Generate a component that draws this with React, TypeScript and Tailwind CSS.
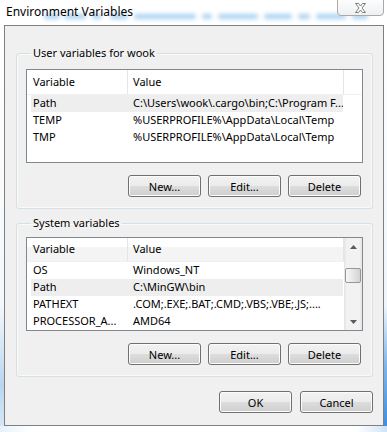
import React from "react";

const F = "font-['Segoe_UI','Noto_Sans',sans-serif]";

function Btn({ label }: { label: string }) {
  return (
    <div className="w-[73px] h-[22px] rounded-[3px] border border-[#707070] bg-[linear-gradient(to_bottom,#f2f2f2_0%,#ebebeb_50%,#dddddd_50%,#cfcfcf_100%)] shadow-[inset_0_0_0_1px_#fcfcfc] flex items-center justify-center text-[11px] leading-none text-black">
      {label}
    </div>
  );
}

type Row = { k: string; v: string; hl?: boolean };

function Rows({ rows }: { rows: Row[] }) {
  return (
    <div className="flex flex-col">
      {rows.map((r, i) => (
        <div
          key={i}
          className={`ml-[4px] w-[312px] h-[17px] flex items-center text-[11px] text-black ${r.hl ? "bg-[#eeeeee]" : ""}`}
        >
          <div className="w-[97px] pl-[2px] whitespace-nowrap overflow-hidden">{r.k}</div>
          <div className="flex-1 pl-[5px] whitespace-nowrap overflow-hidden">{r.v}</div>
        </div>
      ))}
    </div>
  );
}

function Header({ alt }: { alt?: boolean }) {
  return (
    <div
      className={`h-[25px] flex text-[11px] text-black border-b border-[#f0f0f0] ${alt ? "bg-[linear-gradient(to_bottom,#ffffff_0%,#ffffff_40%,#f4f4f4_40%,#f4f4f4_100%)]" : "bg-white"}`}
    >
      <div className="w-[101px] border-r border-[#e5e5e5] pl-[6px] flex items-center">Variable</div>
      <div className="w-[216px] border-r border-[#e5e5e5] pl-[5px] flex items-center">Value</div>
      <div className="flex-1" />
    </div>
  );
}

function Tri({ up }: { up?: boolean }) {
  return (
    <svg width="7" height="4" viewBox="0 0 7 4">
      {up ? <polygon points="0,4 7,4 3.5,0" fill="#5a5a5a" /> : <polygon points="0,0 7,0 3.5,4" fill="#5a5a5a" />}
    </svg>
  );
}

const blurSegs = [
  [44, 16], [64, 22], [92, 10], [110, 18], [134, 62], [202, 10], [218, 40], [264, 28], [298, 12], [316, 30], [352, 16],
];

export default function App() {
  return (
    <div className={`w-[387px] h-[432px] bg-white overflow-hidden flex flex-col ${F}`}>
      {/* title bar */}
      <div className="relative h-[25px] flex items-start shrink-0">
        {blurSegs.map(([x, w], i) => (
          <div
            key={i}
            className="absolute top-[14px] h-[5px] rounded-full bg-[#a9d2f3] blur-[2px]"
            style={{ left: x, width: w }}
          />
        ))}
        <div className="relative pl-[6px] pt-[4px] text-[12px] leading-[16px] text-black">Environment Variables</div>
        <div className="relative ml-auto mr-[3px] mt-[-1px] w-[47px] h-[17px] rounded-b-[4px] border border-[#a9a9a9] bg-[linear-gradient(to_bottom,#fdfdfd,#eef0f2)] flex items-center justify-center">
          <svg width="11" height="10" viewBox="-0.5 -0.5 11 10">
            <polygon
              points="0,0 3,0 5,2.5 7,0 10,0 6.5,4.5 10,9 7,9 5,6.5 3,9 0,9 3.5,4.5"
              fill="#ffffff"
              stroke="#7c7c7c"
              strokeWidth="1"
              strokeLinejoin="round"
            />
          </svg>
        </div>
      </div>

      {/* body row */}
      <div className="flex h-[401px] shrink-0">
        <div className="w-[4px] bg-[linear-gradient(to_bottom,#ffffff_0%,#f4f8fb_70%,#b9d6f0_90%,#d6e7f6_100%)]" />
        <div className="w-[380px] border border-[#7f7f7f] bg-[#f0f0f0] flex flex-col pl-[11px] pr-[10px]">
          {/* user variables */}
          <fieldset className="mt-[19px] border border-[#d5dfe5] rounded-[3px] shadow-[inset_0_0_0_1px_#fafafa] px-[9px] pt-[8px] pb-[11px]">
            <legend className="ml-[5px] px-[2px] text-[11px] leading-[16px] text-black">User variables for wook</legend>
            <div className="h-[94px] border border-[#828790] bg-white flex flex-col overflow-hidden">
              <Header />
              <Rows
                rows={[
                  { k: "Path", v: "C:\\Users\\wook\\.cargo\\bin;C:\\Program F...", hl: true },
                  { k: "TEMP", v: "%USERPROFILE%\\AppData\\Local\\Temp" },
                  { k: "TMP", v: "%USERPROFILE%\\AppData\\Local\\Temp" },
                ]}
              />
            </div>
            <div className="mt-[12px] pr-[2px] flex justify-end gap-[7px]">
              <Btn label="New..." />
              <Btn label="Edit..." />
              <Btn label="Delete" />
            </div>
          </fieldset>

          {/* system variables */}
          <fieldset className="mt-[6px] border border-[#d5dfe5] rounded-[3px] shadow-[inset_0_0_0_1px_#fafafa] px-[9px] pt-[6px] pb-[11px]">
            <legend className="ml-[5px] px-[2px] text-[11px] leading-[16px] text-black">System variables</legend>
            <div className="h-[94px] border border-[#828790] bg-white flex overflow-hidden">
              <div className="w-[317px] flex flex-col">
                <Header alt />
                <Rows
                  rows={[
                    { k: "OS", v: "Windows_NT" },
                    { k: "Path", v: "C:\\MinGW\\bin", hl: true },
                    { k: "PATHEXT", v: ".COM;.EXE;.BAT;.CMD;.VBS;.VBE;.JS;...." },
                    { k: "PROCESSOR_A...", v: "AMD64" },
                  ]}
                />
              </div>
              <div className="flex-1 flex flex-col bg-[linear-gradient(to_right,#e3e3e3_0%,#f2f2f2_15%,#f2f2f2_85%,#e3e3e3_100%)]">
                <div className="h-[17px] flex items-center justify-center">
                  <Tri up />
                </div>
                <div className="h-[13px]" />
                <div className="mx-[1px] h-[15px] rounded-[2px] border border-[#979797] bg-[linear-gradient(to_right,#f7f7f7,#e6e6e6_50%,#d2d2d2)]" />
                <div className="flex-1" />
                <div className="h-[17px] flex items-center justify-center">
                  <Tri />
                </div>
              </div>
            </div>
            <div className="mt-[12px] pr-[2px] flex justify-end gap-[7px]">
              <Btn label="New..." />
              <Btn label="Edit..." />
              <Btn label="Delete" />
            </div>
          </fieldset>

          <div className="mt-[14px] flex justify-end gap-[8px]">
            <Btn label="OK" />
            <Btn label="Cancel" />
          </div>
        </div>
        <div className="w-[3px] bg-[linear-gradient(to_bottom,#ffffff_0%,#eef5fb_70%,#7fb6ea_85%,#3e8fe0_100%)]" />
      </div>
      <div className="flex-1 bg-[linear-gradient(to_right,#e8f1fa_0%,#ffffff_8%,#ffffff_92%,#cfe3f6_100%)]" />
    </div>
  );
}
